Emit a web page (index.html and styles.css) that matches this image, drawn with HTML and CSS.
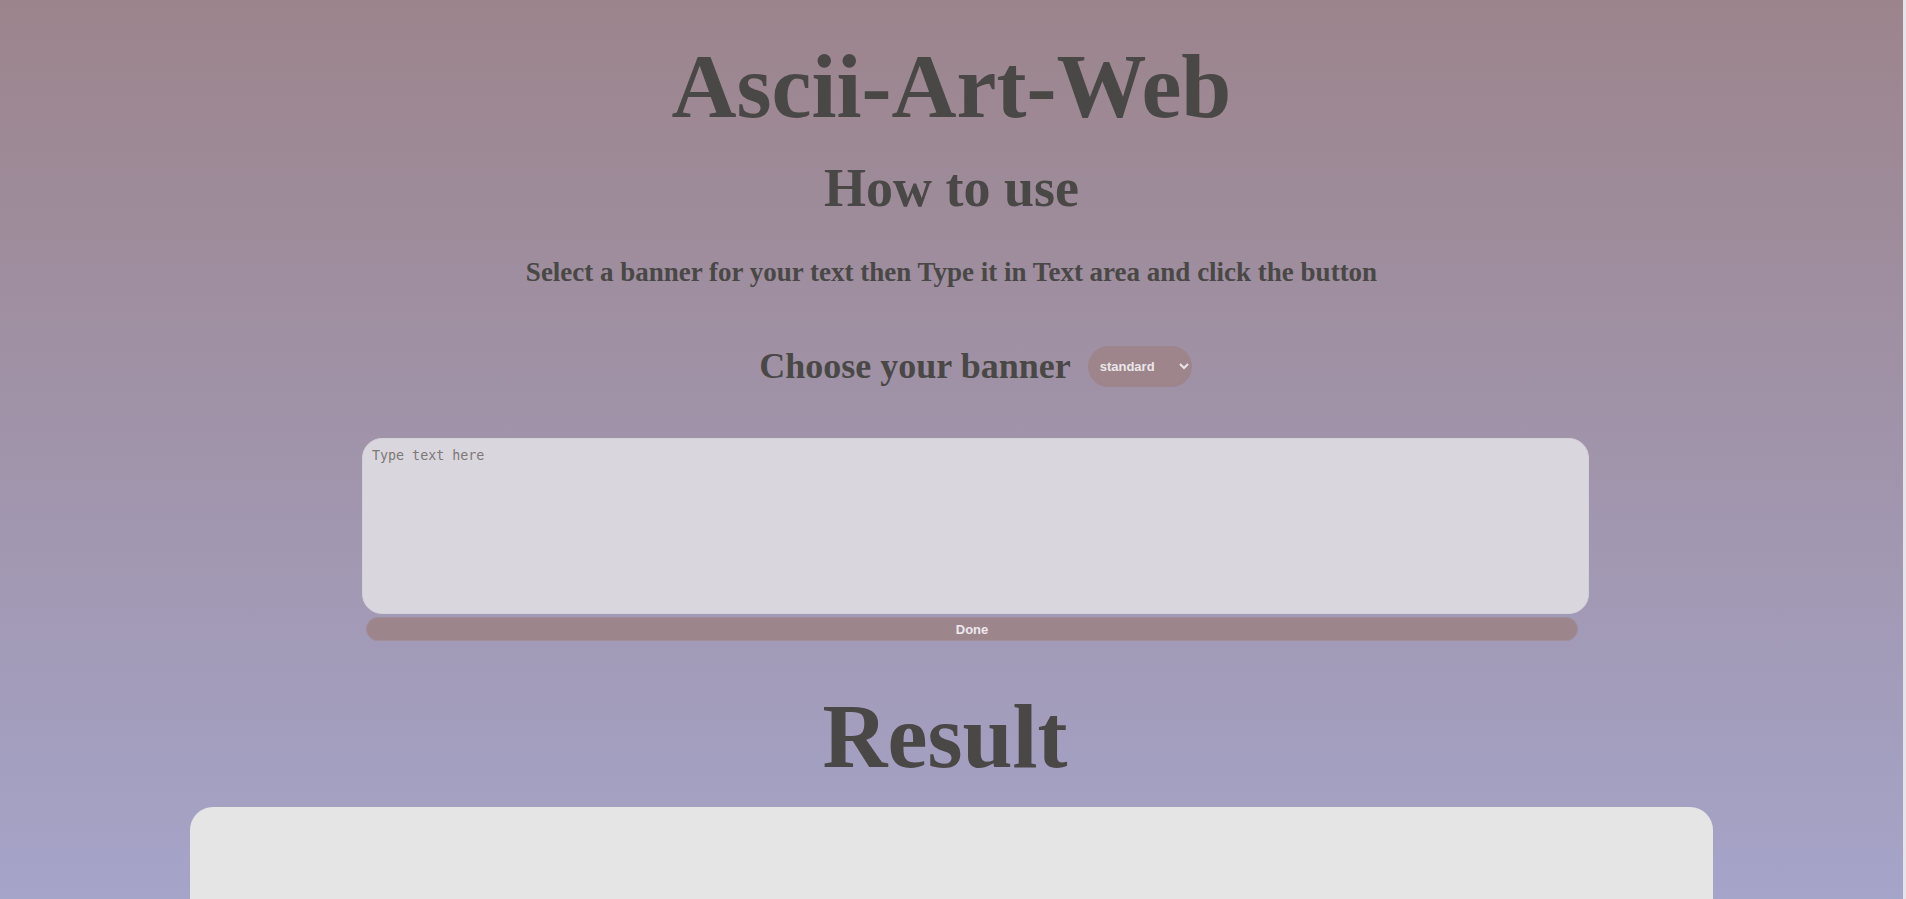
FILE: index.html
```html
<!DOCTYPE html>
<html lang="en">
<head>
<meta charset="utf-8">
<title>Ascii-Art-Web</title>
<link rel="stylesheet" href="styles.css">
</head>
<body>
<h1 class="title">Ascii-Art-Web</h1>
<h2 class="subtitle">How to use</h2>
<h3 class="intro">Select a banner for your text then Type it in Text area and click the button</h3>
<form class="form">
  <div class="banner-row">
    <label class="banner-label" for="banner">Choose your banner</label>
    <select class="banner-select" id="banner" name="banner">
      <option>standard</option>
      <option>shadow</option>
      <option>thinkertoy</option>
    </select>
  </div>
  <div class="input-block">
    <textarea class="text-input" name="text" placeholder="Type text here"></textarea>
    <button class="done-btn" type="button">Done</button>
  </div>
</form>
<h1 class="result-title">Result</h1>
<div class="result-box"></div>
</body>
</html>
```

FILE: styles.css
```css
html {
  background: linear-gradient(to bottom, #9c848c 0%, #a5a4c9 100%) fixed;
  min-height: 100%;
  border-right: 3px solid #e6e4e9;
}

body {
  margin: 0;
  padding-bottom: 40px;
  font-family: "Liberation Serif", "Times New Roman", serif;
  color: #4a4846;
  text-align: center;
}

.title,
.result-title {
  font-size: 90px;
  line-height: 1.15;
  font-weight: bold;
  margin: 35px 0 0;
}

.subtitle {
  font-size: 54px;
  line-height: 1.15;
  font-weight: bold;
  margin: 18px 0 0;
}

.intro {
  font-size: 27px;
  line-height: 1.15;
  font-weight: bold;
  margin: 38px 0 0;
}

.form {
  padding-left: 48px;
  margin: 58px 0 0;
}

.banner-row {
  display: flex;
  justify-content: center;
  align-items: center;
  gap: 17px;
}

.banner-label {
  font-size: 36px;
  line-height: 1.15;
  font-weight: bold;
}

.banner-select {
  width: 104px;
  height: 41px;
  padding: 0 6px 0 8px;
  border: none;
  border-radius: 21px;
  background-color: #9d858b;
  color: #ece6ea;
  font-family: "Liberation Sans", Arial, sans-serif;
  font-size: 13px;
  font-weight: bold;
  outline: none;
}

.input-block {
  width: 1227px;
  margin: 51px auto 0;
}

.text-input {
  display: block;
  box-sizing: border-box;
  width: 100%;
  height: 176px;
  margin: 0;
  padding: 9px 9px;
  border: 1px solid #d4d0d8;
  border-radius: 20px;
  background: #d9d6dd;
  font-family: "DejaVu Sans Mono", monospace;
  font-size: 13.33px;
  color: #333;
  resize: none;
  outline: none;
}

.text-input::placeholder {
  color: #7d7878;
}

.done-btn {
  display: block;
  box-sizing: border-box;
  width: calc(100% - 15px);
  height: 24px;
  margin: 3px 11px 0 4px;
  padding: 0;
  border: 1px solid #a08d97;
  border-radius: 12px;
  background: #9c868c;
  color: #eee8ee;
  font-family: "Liberation Sans", Arial, sans-serif;
  font-size: 13px;
  font-weight: bold;
}

.result-title {
  margin-top: 44px;
  padding-right: 13px;
}

.result-box {
  width: 80%;
  height: 420px;
  margin: 18px auto 0;
  border-radius: 23px;
  background: #e5e5e5;
}
```
